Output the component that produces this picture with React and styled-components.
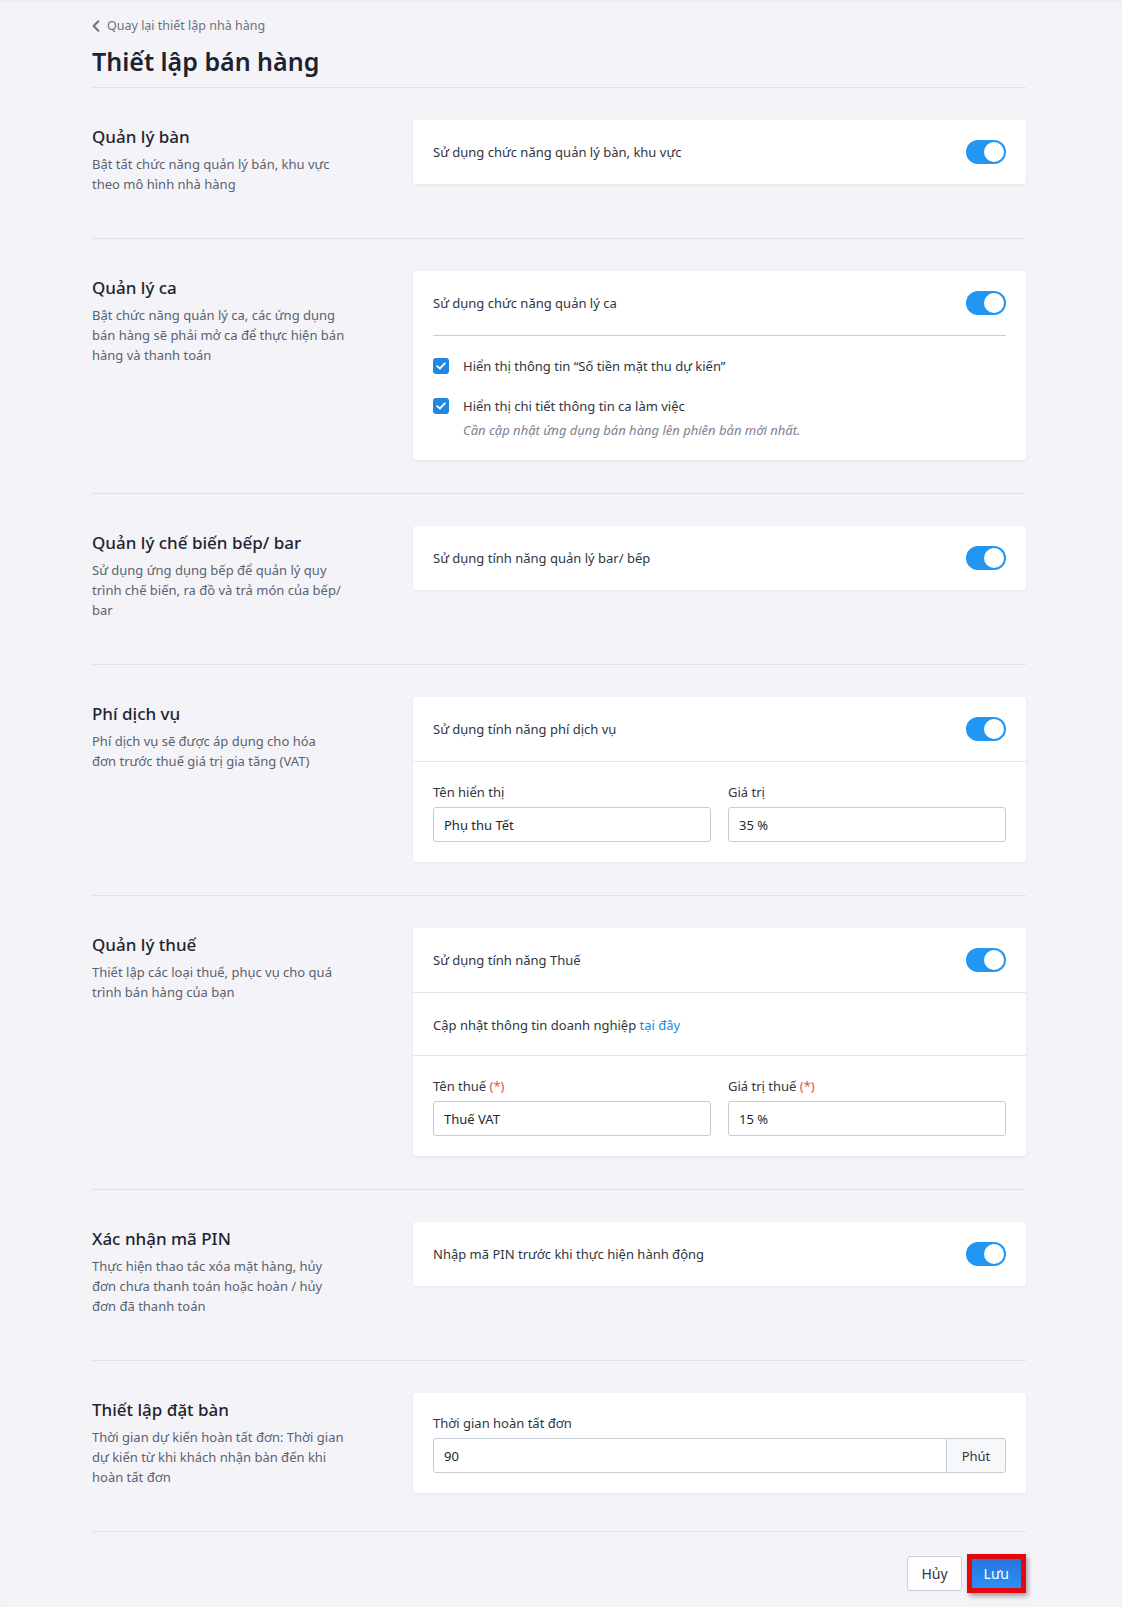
import React from 'react';
import styled, { createGlobalStyle } from 'styled-components';

const GlobalStyle = createGlobalStyle`
  html, body {
    margin: 0;
    padding: 0;
    background: #f4f4f8;
  }
  body {
    font-family: "Noto Sans", "Open Sans", sans-serif;
    color: #2f3640;
    box-shadow: inset 0 2px 2px rgba(0, 0, 0, 0.03);
  }
  * {
    box-sizing: border-box;
  }
`;

const StyledPage = styled.div`
  width: 934px;
  margin-left: 92px;
  padding-bottom: 17px;
`;

const StyledHeader = styled.header`
  padding: 15px 0 8px;
  border-bottom: 1px solid #dfe2e8;
`;

const StyledBackLink = styled.a`
  display: inline-flex;
  align-items: center;
  gap: 7px;
  height: 18px;
  font-size: 12.5px;
  line-height: 18px;
  color: #6b7280;
  text-decoration: none;
  cursor: pointer;
`;

const StyledTitle = styled.h1`
  margin: 6px 0 0;
  font-size: 25px;
  line-height: 36px;
  font-weight: 600;
  color: #1c2230;
`;

const StyledSection = styled.section`
  display: grid;
  grid-template-columns: 280px 613px;
  column-gap: 41px;
  align-items: start;
  padding: 32px 0 33px;
  border-bottom: 1px solid #dfe2e8;
`;

const StyledIntro = styled.div`
  padding-top: 4px;
  margin-bottom: 11px;
`;

const StyledSectionTitle = styled.h3`
  margin: 0;
  font-size: 17px;
  line-height: 26px;
  font-weight: 500;
  color: #1f2430;
`;

const StyledSectionDesc = styled.p`
  margin: 4px 0 0;
  font-size: 13px;
  line-height: 20px;
  color: #5b6270;

  span {
    display: block;
    white-space: nowrap;
  }
`;

const StyledCard = styled.div`
  background: #fff;
  border-radius: 3px;
  box-shadow: 0 1px 3px rgba(30, 40, 60, 0.08);
`;

const StyledBlock = styled.div`
  padding: 20px;
  border-top: ${({ $divided }) => ($divided ? '1px solid #e2e5ea' : 'none')};
`;

const StyledInsetDivider = styled.hr`
  margin: 0 20px;
  border: 0;
  border-top: 1px solid #c6cedb;
`;

const StyledToggleRow = styled.div`
  display: flex;
  align-items: center;
  justify-content: space-between;
  min-height: 24px;
`;

const StyledText = styled.span`
  font-size: 13px;
  line-height: 20px;
  color: #2f3640;
`;

const StyledLink = styled.a`
  color: #1e88e5;
  text-decoration: none;
  cursor: pointer;
`;

const StyledSwitch = styled.span`
  position: relative;
  flex: none;
  width: 40px;
  height: 24px;
  border-radius: 12px;
  background: ${({ $on }) => ($on ? '#2196f3' : '#cfd5de')};

  &::after {
    content: '';
    position: absolute;
    top: 2px;
    left: ${({ $on }) => ($on ? '18px' : '2px')};
    width: 20px;
    height: 20px;
    border-radius: 50%;
    background: #fff;
  }
`;

const StyledCheckList = styled.div`
  display: flex;
  flex-direction: column;
  gap: 20px;
`;

const StyledCheckItem = styled.label`
  display: flex;
  align-items: center;
  gap: 14px;
  font-size: 13px;
  line-height: 20px;
  color: #2f3640;
`;

const StyledCheckBox = styled.span`
  display: inline-flex;
  align-items: center;
  justify-content: center;
  flex: none;
  width: 16px;
  height: 16px;
  border-radius: 3px;
  background: #1e88e5;
`;

const StyledNote = styled.p`
  margin: 4px 0 0 30px;
  font-size: 13px;
  line-height: 20px;
  font-style: italic;
  color: #7b8290;
`;

const StyledFieldGrid = styled.div`
  display: grid;
  grid-template-columns: 1fr 1fr;
  column-gap: 17px;
`;

const StyledField = styled.div`
  display: flex;
  flex-direction: column;
  gap: 5px;
`;

const StyledLabel = styled.label`
  font-size: 13px;
  line-height: 20px;
  color: #2f3640;
`;

const StyledRequired = styled.span`
  color: #f04848;
`;

const StyledInput = styled.input`
  width: 100%;
  height: 35px;
  padding: 0 10px;
  border: 1px solid #c5ccd6;
  border-radius: ${({ $grouped }) => ($grouped ? '3px 0 0 3px' : '3px')};
  font-family: inherit;
  font-size: 13px;
  color: #222831;
  background: #fff;
  outline: none;
`;

const StyledInputGroup = styled.div`
  display: flex;
`;

const StyledAddon = styled.span`
  display: flex;
  align-items: center;
  justify-content: center;
  flex: none;
  width: 59px;
  height: 35px;
  border: 1px solid #c5ccd6;
  border-left: 0;
  border-radius: 0 3px 3px 0;
  background: #f7f8fa;
  font-size: 13px;
  color: #2f3640;
`;

const StyledFooter = styled.div`
  display: flex;
  justify-content: flex-end;
  align-items: center;
  gap: 5px;
  padding-top: 22px;
`;

const StyledButton = styled.button`
  height: ${({ $primary }) => ($primary ? '39px' : '35px')};
  padding: 0 ${({ $primary }) => ($primary ? '12px' : '13px')};
  font-family: inherit;
  font-size: 14px;
  cursor: pointer;
  border: ${({ $primary }) => ($primary ? '5px solid #e5060e' : '1px solid #c9cfd8')};
  border-radius: ${({ $primary }) => ($primary ? '0' : '3px')};
  background: ${({ $primary }) => ($primary ? 'linear-gradient(180deg, #2775da 0%, #2b90f7 100%)' : '#fff')};
  color: ${({ $primary }) => ($primary ? '#fff' : '#2f3640')};
  box-shadow: ${({ $primary }) => ($primary ? '2px 3px 5px rgba(0, 0, 0, 0.35)' : 'none')};
`;

const ChevronLeft = () => (
  <svg width="8" height="12" viewBox="0 0 8 12" fill="none">
    <path d="M6.3 1.2 1.6 6l4.7 4.8" stroke="#6b7280" strokeWidth="2" strokeLinecap="round" strokeLinejoin="round" />
  </svg>
);

const Check = () => (
  <svg width="10" height="8" viewBox="0 0 10 8" fill="none">
    <path d="M1.2 4.2 3.8 6.6 8.8 1.4" stroke="#fff" strokeWidth="1.8" strokeLinecap="round" strokeLinejoin="round" />
  </svg>
);

const Section = ({ title, lines, children }) => (
  <StyledSection>
    <StyledIntro>
      <StyledSectionTitle>{title}</StyledSectionTitle>
      <StyledSectionDesc>
        {lines.map(line => <span key={line}>{line}</span>)}
      </StyledSectionDesc>
    </StyledIntro>
    <StyledCard>{children}</StyledCard>
  </StyledSection>
);

const ToggleRow = ({ label }) => (
  <StyledToggleRow>
    <StyledText>{label}</StyledText>
    <StyledSwitch $on />
  </StyledToggleRow>
);

const Field = ({ label, value, required }) => (
  <StyledField>
    <StyledLabel>
      {label}
      {required && <StyledRequired> (*)</StyledRequired>}
    </StyledLabel>
    <StyledInput defaultValue={value} />
  </StyledField>
);

const App = () => (
  <>
    <GlobalStyle />
    <StyledPage>
      <StyledHeader>
        <StyledBackLink>
          <ChevronLeft />
          Quay lại thiết lập nhà hàng
        </StyledBackLink>
        <StyledTitle>Thiết lập bán hàng</StyledTitle>
      </StyledHeader>

      <Section
        title="Quản lý bàn"
        lines={['Bật tất chức năng quản lý bán, khu vực', 'theo mô hình nhà hàng']}
      >
        <StyledBlock>
          <ToggleRow label="Sử dụng chức năng quản lý bàn, khu vực" />
        </StyledBlock>
      </Section>

      <Section
        title="Quản lý ca"
        lines={['Bật chức năng quản lý ca, các ứng dụng', 'bán hàng sẽ phải mở ca để thực hiện bán', 'hàng và thanh toán']}
      >
        <StyledBlock>
          <ToggleRow label="Sử dụng chức năng quản lý ca" />
        </StyledBlock>
        <StyledInsetDivider />
        <StyledBlock>
          <StyledCheckList>
            <StyledCheckItem>
              <StyledCheckBox><Check /></StyledCheckBox>
              Hiển thị thông tin “Số tiền mặt thu dự kiến”
            </StyledCheckItem>
            <StyledCheckItem>
              <StyledCheckBox><Check /></StyledCheckBox>
              Hiển thị chi tiết thông tin ca làm việc
            </StyledCheckItem>
          </StyledCheckList>
          <StyledNote>Cần cập nhật ứng dụng bán hàng lên phiên bản mới nhất.</StyledNote>
        </StyledBlock>
      </Section>

      <Section
        title="Quản lý chế biến bếp/ bar"
        lines={['Sử dụng ứng dụng bếp để quản lý quy', 'trình chế biến, ra đồ và trả món của bếp/', 'bar']}
      >
        <StyledBlock>
          <ToggleRow label="Sử dụng tính năng quản lý bar/ bếp" />
        </StyledBlock>
      </Section>

      <Section
        title="Phí dịch vụ"
        lines={['Phí dịch vụ sẽ được áp dụng cho hóa', 'đơn trước thuế giá trị gia tăng (VAT)']}
      >
        <StyledBlock>
          <ToggleRow label="Sử dụng tính năng phí dịch vụ" />
        </StyledBlock>
        <StyledBlock $divided>
          <StyledFieldGrid>
            <Field label="Tên hiển thị" value="Phụ thu Tết" />
            <Field label="Giá trị" value="35 %" />
          </StyledFieldGrid>
        </StyledBlock>
      </Section>

      <Section
        title="Quản lý thuế"
        lines={['Thiết lập các loại thuế, phục vụ cho quá', 'trình bán hàng của bạn']}
      >
        <StyledBlock>
          <ToggleRow label="Sử dụng tính năng Thuế" />
        </StyledBlock>
        <StyledBlock $divided>
          <StyledText>
            Cập nhật thông tin doanh nghiệp <StyledLink>tại đây</StyledLink>
          </StyledText>
        </StyledBlock>
        <StyledBlock $divided>
          <StyledFieldGrid>
            <Field label="Tên thuế" value="Thuế VAT" required />
            <Field label="Giá trị thuế" value="15 %" required />
          </StyledFieldGrid>
        </StyledBlock>
      </Section>

      <Section
        title="Xác nhận mã PIN"
        lines={['Thực hiện thao tác xóa mặt hàng, hủy', 'đơn chưa thanh toán hoặc hoàn / hủy', 'đơn đã thanh toán']}
      >
        <StyledBlock>
          <ToggleRow label="Nhập mã PIN trước khi thực hiện hành động" />
        </StyledBlock>
      </Section>

      <Section
        title="Thiết lập đặt bàn"
        lines={['Thời gian dự kiến hoàn tất đơn: Thời gian', 'dự kiến từ khi khách nhận bàn đến khi', 'hoàn tất đơn']}
      >
        <StyledBlock>
          <StyledField>
            <StyledLabel>Thời gian hoàn tất đơn</StyledLabel>
            <StyledInputGroup>
              <StyledInput $grouped defaultValue="90" />
              <StyledAddon>Phút</StyledAddon>
            </StyledInputGroup>
          </StyledField>
        </StyledBlock>
      </Section>

      <StyledFooter>
        <StyledButton>Hủy</StyledButton>
        <StyledButton $primary>Lưu</StyledButton>
      </StyledFooter>
    </StyledPage>
  </>
);

export default App;
